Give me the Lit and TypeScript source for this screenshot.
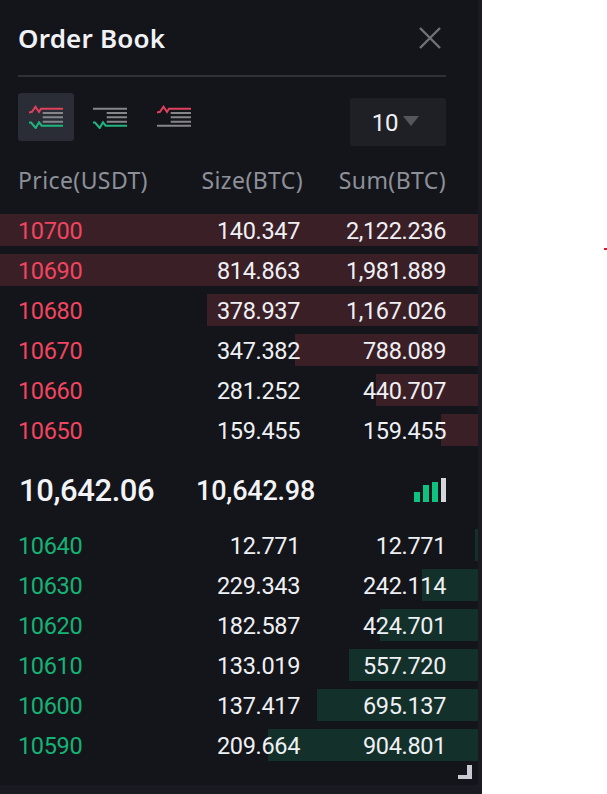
import { LitElement, html, css, svg } from "lit";
import { customElement } from "lit/decorators.js";

const asks = [
  ["10700", "140.347", "2,122.236", 478],
  ["10690", "814.863", "1,981.889", 478],
  ["10680", "378.937", "1,167.026", 271],
  ["10670", "347.382", "788.089", 183],
  ["10660", "281.252", "440.707", 102],
  ["10650", "159.455", "159.455", 37],
] as const;
const bids = [
  ["10640", "12.771", "12.771", 3],
  ["10630", "229.343", "242.114", 56],
  ["10620", "182.587", "424.701", 98],
  ["10610", "133.019", "557.720", 129],
  ["10600", "137.417", "695.137", 161],
  ["10590", "209.664", "904.801", 210],
] as const;

const R = "#e0405e", G = "#1fb57f", N = "#85858a";
const icon = (top: string, bottom: string, topWave: boolean, bottomWave: boolean) => html`
  <svg width="34" height="24" viewBox="0 0 34 24" fill="none" stroke-width="2">
    ${topWave
      ? svg`<path d="M0 7.5 L3 6.8 L6.5 1.8 L10 7 L12 3.7 H34" stroke=${top}/>`
      : svg`<path d="M0 3.7 H34" stroke=${top}/>`}
    <path d="M13.7 8 H34 M13.7 12.3 H34 M13.7 16.7 H34" stroke=${N}/>
    ${bottomWave
      ? svg`<path d="M0 17.5 H2 L6.7 23 L10 17.3 L12.7 20.7 H34" stroke=${bottom}/>`
      : svg`<path d="M0 20.7 H34" stroke=${bottom}/>`}
  </svg>`;

@customElement("app-root")
export class AppRoot extends LitElement {
  static styles = css`
    :host { display: block; position: relative; width: 607px; height: 794px; background: #fff; overflow: hidden;
      font-family: Roboto, "Liberation Sans", sans-serif; }
    .panel { width: 482px; height: 794px; box-sizing: border-box; background: #1a1b22; padding: 0 4px 9px 0; }
    .inner { height: 100%; background: #14151a; display: flex; flex-direction: column; }
    .head { margin: 0 32px 0 18px; height: 77px; box-sizing: border-box; border-bottom: 2px solid #2f3038;
      display: flex; align-items: center; justify-content: space-between; }
    .title { font-family: "Noto Sans", sans-serif; font-size: 26px; font-weight: 600; color: #f0f1f5; letter-spacing: 0.2px; }
    .close { display: block; margin-right: 4px; }
    .tools { margin: 16px 32px 0 18px; height: 48px; display: flex; align-items: flex-start; gap: 8px; }
    .tool { width: 56px; height: 48px; border-radius: 3px; display: flex; align-items: center; justify-content: center; }
    .tool.on { background: #2a2d35; }
    .depth { margin: 5px 0 0 auto; width: 96px; height: 48px; border-radius: 3px; background: #1f2026; display: flex;
      align-items: center; justify-content: center; gap: 5px; color: #eef0f4; font-size: 24px; letter-spacing: -0.3px; padding: 2px 5px 0 0; box-sizing: border-box; }
    .tri { width: 0; height: 0; border-left: 8px solid transparent; border-right: 8px solid transparent; border-top: 10px solid #55565c; margin-top: -4px; }
    .cols { margin: 23px 32px 0 18px; height: 32px; display: grid; grid-template-columns: 1fr 120px 143px; align-items: center;
      color: #8d9099; font-size: 23px; font-family: "Noto Sans", sans-serif; letter-spacing: 0.4px; }
    .r { text-align: right; }
    .book { margin-top: 18px; display: flex; flex-direction: column; gap: 8px; }
    .row { position: relative; height: 32px; box-sizing: border-box; display: grid; grid-template-columns: 1fr 120px 146px; padding: 2px 32px 0 18px;
      align-items: center; color: #eef0f4; font-size: 23.5px; line-height: 30px; letter-spacing: -0.35px; }
    .row > span { position: relative; }
    .bar { position: absolute; top: 0; bottom: 0; right: 0; }
    .ask .bar { background: #3b1f27; }
    .bid .bar { background: #14302a; }
    .ask .p { color: #f0455f; }
    .bid .p { color: #14b274; }
    .mid { margin: 19px 0 16px; height: 48px; display: flex; align-items: center; padding: 0 32px 0 19px;
      color: #f2f3f6; font-weight: 500; }
    .m1 { font-size: 31px; width: 177px; letter-spacing: -0.4px; padding-top: 3px; }
    .m2 { font-size: 27px; letter-spacing: -0.2px; padding-top: 3px; }
    .sig { margin-left: auto; display: flex; align-items: flex-end; gap: 3px; height: 24px; padding-top: 1px; }
    .sig i { display: block; width: 6px; background: #0ec27f; }
    .sig i:last-child { background: #d5d6da; width: 5px; }
    .grip { align-self: flex-end; margin: 4px 6px 0 0; width: 14px; height: 14px; box-sizing: border-box;
      border-right: 5px solid #c9cad3; border-bottom: 4px solid #c9cad3; }
    .dot { position: absolute; left: 604px; top: 248px; width: 3px; height: 2px; background: #e0102f; }
  `;
  render() {
    const row = (r: readonly [string, string, string, number], cls: string) => html`
      <div class="row ${cls}">
        <div class="bar" style="width:${r[3]}px"></div>
        <span class="p">${r[0]}</span><span class="r">${r[1]}</span><span class="r">${r[2]}</span>
      </div>`;
    return html`
      <div class="panel"><div class="inner">
        <div class="head">
          <span class="title">Order Book</span>
          <svg class="close" width="24" height="24" viewBox="0 0 24 24" stroke="#70727a" stroke-width="2.4" fill="none">
            <path d="M2 2 L22 22 M22 2 L2 22"/>
          </svg>
        </div>
        <div class="tools">
          <div class="tool on">${icon(R, G, true, true)}</div>
          <div class="tool">${icon(N, G, false, true)}</div>
          <div class="tool">${icon(R, N, true, false)}</div>
          <div class="depth">10<span class="tri"></span></div>
        </div>
        <div class="cols"><span>Price(USDT)</span><span class="r">Size(BTC)</span><span class="r">Sum(BTC)</span></div>
        <div class="book">${asks.map((r) => row(r, "ask"))}</div>
        <div class="mid">
          <span class="m1">10,642.06</span><span class="m2">10,642.98</span>
          <div class="sig">
            <i style="height:10px"></i><i style="height:17px"></i><i style="height:20px"></i><i style="height:24px"></i>
          </div>
        </div>
        <div class="book" style="margin-top:0">${bids.map((r) => row(r, "bid"))}</div>
        <div class="grip"></div>
      </div></div>
      <div class="dot"></div>
    `;
  }
}
